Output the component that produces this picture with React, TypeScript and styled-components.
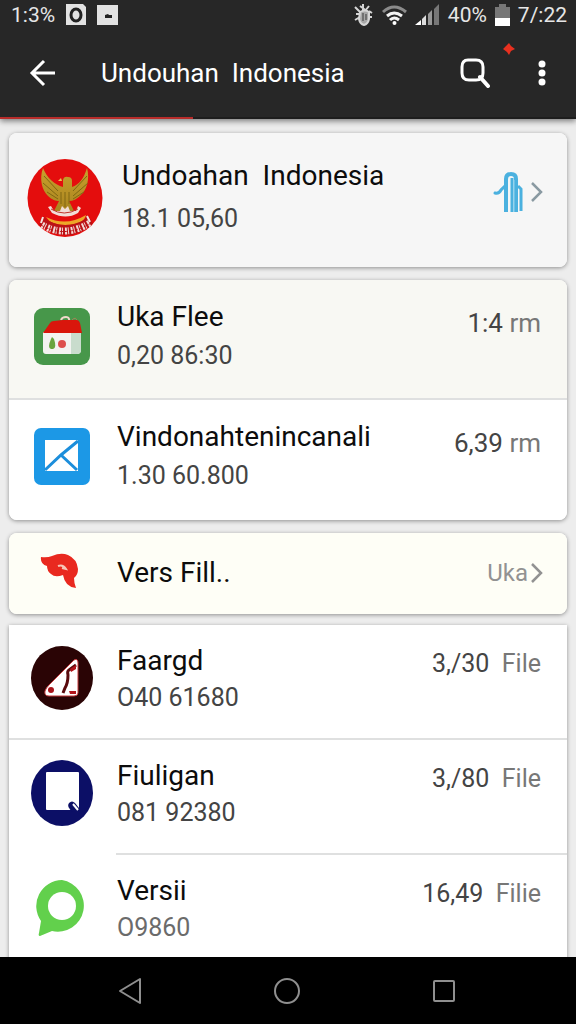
import React, { ReactNode } from "react";
import styled, { createGlobalStyle } from "styled-components";

const GlobalStyle = createGlobalStyle`
  *, *::before, *::after { box-sizing: border-box; }
  body { margin: 0; background: #ededed; font-family: Roboto, "Noto Sans", sans-serif; }
  h1, h2, p, ul { margin: 0; padding: 0; }
  ul { list-style: none; }
  svg { display: block; flex: none; }
`;

const Screen = styled.div`
  display: flex;
  flex-direction: column;
  height: 100vh;
  overflow: hidden;
`;

const Header = styled.header`
  flex: none;
  background: #272727;
  color: #fff;
  box-shadow: 0 2px 6px rgba(0, 0, 0, 0.5);
  z-index: 1;
`;

const StatusBar = styled.div`
  display: flex;
  align-items: center;
  justify-content: space-between;
  height: 29px;
  padding: 0 9px 0 11px;
  font-size: 21px;
  line-height: 28px;
  color: #e6e6e6;
`;

const StatusGroup = styled.div<{ $gap: number }>`
  display: flex;
  align-items: center;
  gap: ${(p) => p.$gap}px;
`;

const Toolbar = styled.div`
  display: flex;
  align-items: center;
  height: 88px;
  padding: 0 16px 0 25px;
`;

const Title = styled.h1`
  flex: 1;
  margin-left: 42px;
  font-size: 26px;
  font-weight: 400;
  line-height: 36px;
  white-space: pre;
`;

const Actions = styled.div`
  display: flex;
  gap: 21px;
`;

const IconButton = styled.button<{ $width: number }>`
  position: relative;
  display: flex;
  align-items: center;
  justify-content: center;
  width: ${(p) => p.$width}px;
  height: 48px;
  padding: 0;
  border: 0;
  background: none;
  color: inherit;
`;

const AlertDot = styled.svg`
  position: absolute;
  top: -6px;
  right: -12px;
`;

const Progress = styled.div`
  height: 2px;
  background: #1d1d1d;
`;

const ProgressValue = styled.div`
  width: 33.5%;
  height: 100%;
  background: #b82c2a;
`;

const Content = styled.main`
  display: flex;
  flex: 1;
  flex-direction: column;
  gap: 13px;
  min-height: 0;
  padding: 14px 9px 0;
  overflow: hidden;
`;

const Card = styled.ul<{ $flat?: boolean }>`
  flex: none;
  overflow: hidden;
  margin-top: ${(p) => (p.$flat ? "-2px" : "0")};
  border-radius: ${(p) => (p.$flat ? "0" : "8px")};
  background: #fff;
  box-shadow: 0 1px 4px rgba(0, 0, 0, 0.4);
`;

type Size = "hero" | "tall" | "slim" | "list";

const metrics = {
  hero: { height: 134, top: 21, line: 43, slot: 130, icon: 113, aside: 0, amount: 26 },
  tall: { height: 120, top: 17, line: 39, slot: 112, icon: 108, aside: 24, amount: 26 },
  slim: { height: 81, top: 20, line: 39, slot: 75, icon: 108, aside: 20, amount: 26 },
  list: { height: 115, top: 17, line: 37, slot: 106, icon: 108, aside: 19, amount: 25 },
};

const Row = styled.li<{ $size: Size; $tint?: string; $divider?: "full" | "inset" }>`
  position: relative;
  display: flex;
  align-items: flex-start;
  height: ${(p) => metrics[p.$size].height}px;
  padding-right: 26px;
  background: ${(p) => p.$tint ?? "#fff"};
  color: #0c0c0c;

  &::after {
    content: "";
    display: ${(p) => (p.$divider ? "block" : "none")};
    position: absolute;
    right: 0;
    bottom: 0;
    left: ${(p) => (p.$divider === "inset" ? "107px" : "0")};
    height: 2px;
    background: #dfe0e0;
  }
`;

const IconSlot = styled.div<{ $size: Size }>`
  display: flex;
  flex: none;
  align-items: center;
  justify-content: center;
  width: ${(p) => metrics[p.$size].icon}px;
  height: ${(p) => metrics[p.$size].slot}px;
  padding-right: 2px;
`;

const Texts = styled.div<{ $size: Size }>`
  flex: 1;
  min-width: 0;
  padding-top: ${(p) => metrics[p.$size].top}px;
  line-height: ${(p) => metrics[p.$size].line}px;
  white-space: pre;
`;

const Name = styled.h2`
  font-size: 28px;
  font-weight: 400;
  line-height: inherit;
`;

const Detail = styled.p<{ $light?: boolean }>`
  font-size: 25px;
  color: ${(p) => (p.$light ? "#6b6b6b" : "#444")};
`;

const Amount = styled.p<{ $size: Size }>`
  padding-top: ${(p) => metrics[p.$size].aside}px;
  font-size: ${(p) => metrics[p.$size].amount}px;
  line-height: 39px;
  color: #444;
  white-space: pre;
`;

const Unit = styled.span`
  color: #777;
`;

const MoreLink = styled.a<{ $height: number; $gap: number }>`
  display: flex;
  align-items: center;
  height: ${(p) => p.$height}px;
  gap: ${(p) => p.$gap}px;
  margin-right: -2px;
  font-size: 24px;
  color: #929292;
  text-decoration: none;
`;

const NavBar = styled.nav`
  display: flex;
  flex: none;
  align-items: center;
  justify-content: space-between;
  height: 67px;
  padding: 0 100px 0 98px;
  background: #000;
  color: #8f8f8f;
  z-index: 1;
`;

const Chevron = ({ color }: { color: string }) => (
  <svg width="12" height="22" viewBox="0 0 12 22" fill="none" stroke={color} strokeWidth="2.500">
    <path d="M1 2l9 9-9 9" />
  </svg>
);

const Emblem = () => (
  <svg width="76" height="80" viewBox="0 0 76 80">
    <defs>
      <clipPath id="disc"><ellipse cx="38" cy="40" rx="37.500" ry="39" /></clipPath>
      <linearGradient id="gold" x1="0" y1="0" x2="0" y2="1">
        <stop offset="0" stopColor="#c9a02c" />
        <stop offset="1" stopColor="#a9851f" />
      </linearGradient>
    </defs>
    <g clipPath="url(#disc)">
      <rect width="76" height="80" fill="#e40d0d" />
      <path d="M16 10c-4 11-1 22 5 28 4 4 8 5 11 5l-5 10h20l-5-10c4 0 8-2 11-5 7-6 10-17 7-28-3 10-8 17-15 19v-6q0-4-4-4-4-1-5 3v7c-8-2-16-9-20-19z" fill="url(#gold)" />
      <path d="M17 18l14 15M16 25l15 13M20 34l11 7M60 18L46 33M61 25L46 38M57 34l-11 7M34 34v12M38 34v15M42 34v12" stroke="#806713" strokeWidth="1" />
      <path d="M34 20l-3 3h4z" fill="#e8c251" />
      <path d="M21 49l3-1 3 5h6l2-5 3 3 3-3 2 5h6l2-5 3 2-3 5q-12 7-26 0z" fill="#f1ded7" />
      <path d="M24 51q13 8 27 0" fill="none" stroke="#c0362c" strokeWidth="1" />
      <path d="M19 59q20 10 40-2-2 10-21 10-14 0-19-8z" fill="#eda728" />
      <path d="M16 58l4 4q18 10 37 0l4-5 5 9q-26 22-54 1z" fill="#bb1216" />
      <path d="M16 59l-2 6M60 58l3 6" stroke="#f6e5e2" strokeWidth="2" />
      <path d="M15 67q23 13 48-2" fill="none" stroke="#f3dbd8" strokeWidth="7" strokeDasharray="2 1 1 2" />
      <path d="M14 67q24 14 50-2" fill="none" stroke="#bb1216" strokeWidth="1" strokeDasharray="3 2" />
    </g>
  </svg>
);

const HouseIcon = () => (
  <svg width="56" height="57" viewBox="0 0 56 57">
    <rect width="56" height="57" rx="9" fill="#47974a" />
    <path d="M9 24v19q0 3 3 3h31q4 0 4-4V24z" fill="#f3f3f1" />
    <path d="M37 25h10v17q0 4-4 4h-6z" fill="#c9dccd" />
    <path d="M27 12q1-3 5-3t3 5" fill="none" stroke="#f0d9cc" strokeWidth="2" />
    <path d="M38 12q4-4 5 1" fill="none" stroke="#a78458" strokeWidth="1" />
    <path d="M9 25l7-10q1-2 4-2l9-1 14 0q2 0 3 3l2 10z" fill="#d9160c" />
    <path d="M17 31l1-2 2 2q3 9-1 10h-2q-4-1 0-10z" fill="#69a43f" />
    <circle cx="28" cy="36" r="4" fill="#dd4f4d" />
  </svg>
);

const MailIcon = () => (
  <svg width="56" height="57" viewBox="0 0 56 57">
    <rect width="56" height="57" rx="7" fill="#1c98e6" />
    <path d="M11 12h33v31H11z" fill="#fff" />
    <path d="M11 42l16-15L44 13M27 27l16 15" fill="none" stroke="#1c8edb" strokeWidth="3" />
  </svg>
);

const BirdIcon = () => (
  <svg width="44" height="36" viewBox="0 0 44 36">
    <path d="M1 4q6 1 11-1Q21-1 28 2q9 4 10 14 0 6-4 9 0 5 2 10-11-1-13-13-8 3-12-1-4-3-4-8Q0 11 1 4z" fill="#e9291f" />
    <path d="M18 13q5-2 8 3l-4-1" fill="none" stroke="#f7c6b8" strokeWidth="2" />
  </svg>
);

const SailIcon = () => (
  <svg width="62" height="64" viewBox="0 0 62 64">
    <ellipse cx="31" cy="32" rx="31" ry="32" fill="#2a0405" />
    <path d="M43 14q4-2 4 3v30q0 3-4 3H18q-5 0-4-5 1-3 4-6z" fill="#fff" stroke="#c53a3d" strokeWidth="1" />
    <path d="M45 19l-7 5q-2 1-1 5 0 8-3 13l-2 5" fill="none" stroke="#5a0a0d" strokeWidth="3" />
    <path d="M39 23l6-4v4l-5 3zM38 45h7v3h-6z" fill="#b3151b" />
    <circle cx="20" cy="44" r="3" fill="#a8131a" />
  </svg>
);

const NoteIcon = () => (
  <svg width="63" height="66" viewBox="0 0 63 66">
    <ellipse cx="31" cy="33" rx="31" ry="33" fill="#0c0f66" />
    <rect x="15" y="12" width="33" height="38" rx="1" fill="#fff" />
    <path d="M38 43q3-3 6 0l4 5v4h-6q-7-5-4-9z" fill="#0c0f66" />
    <path d="M42 44l5 6" stroke="#fff" strokeWidth="2" />
  </svg>
);

const ChatIcon = () => (
  <svg width="54" height="58" viewBox="0 0 54 58">
    <path d="M27 1a26 26 0 1 1-10 51L5 57q-2 0-1-3l2-12A26 26 0 0 1 27 1z" fill="#62d04c" />
    <circle cx="27" cy="27" r="14" fill="#fff" />
  </svg>
);

const TowerIcon = () => (
  <svg width="30" height="42" viewBox="0 0 30 42" fill="none" stroke="#4bb1df" strokeWidth="4">
    <path d="M2 22q4 1 6-3l4-4" strokeWidth="3" strokeLinecap="round" />
    <path d="M13 41V8q0-5 5-5t5 5v33" />
    <path d="M19 41V7" strokeWidth="3" />
    <path d="M21 41V9" stroke="#8fd3ef" strokeWidth="1" />
    <path d="M25 15l3 3v22" strokeWidth="3" />
  </svg>
);

interface Item {
  name: string;
  detail: string;
  value: string;
  unit: string;
  icon: ReactNode;
  size: Size;
  tint?: string;
  divider?: "full" | "inset";
  light?: boolean;
}

const recent: Item[] = [
  { name: "Uka Flee", detail: "0,20 86:30", value: "1:4", unit: " rm", icon: <HouseIcon />, size: "tall", tint: "#f8f8f3", divider: "full" },
  { name: "Vindonahtenincanali", detail: "1.30 60.800", value: "6,39", unit: " rm", icon: <MailIcon />, size: "tall" },
];

const files: Item[] = [
  { name: "Faargd", detail: "O40 61680", value: "3,/30", unit: "  File", icon: <SailIcon />, size: "list", divider: "full" },
  { name: "Fiuligan", detail: "081 92380", value: "3,/80", unit: "  File", icon: <NoteIcon />, size: "list", divider: "inset" },
  { name: "Versii", detail: "O9860", value: "16,49", unit: "  Filie", icon: <ChatIcon />, size: "list", light: true },
];

const FileRow = ({ item }: { item: Item }) => (
  <Row $size={item.size} $tint={item.tint} $divider={item.divider}>
    <IconSlot $size={item.size}>{item.icon}</IconSlot>
    <Texts $size={item.size}>
      <Name>{item.name}</Name>
      <Detail $light={item.light}>{item.detail}</Detail>
    </Texts>
    <Amount $size={item.size}>
      {item.value}
      <Unit>{item.unit}</Unit>
    </Amount>
  </Row>
);

export default function App() {
  return (
    <Screen>
      <GlobalStyle />
      <Header>
        <StatusBar>
          <StatusGroup $gap={11}>
            <span>1:3%</span>
            <svg width="20" height="21" viewBox="0 0 20 21">
              <path d="M0 0h17l3 3v18H0z" fill="#e2e2e2" />
              <ellipse cx="10" cy="11" rx="5" ry="6" fill="none" stroke="#222" strokeWidth="3" />
            </svg>
            <svg width="21" height="20" viewBox="0 0 21 20">
              <path d="M0 0h21v20H0z" fill="#e2e2e2" />
              <path d="M8 13v-3l3-1 1 1h3v3z" fill="#222" />
            </svg>
          </StatusGroup>
          <StatusGroup $gap={8}>
            <svg width="20" height="23" viewBox="0 0 20 23" fill="none" stroke="#d6d6d6" strokeWidth="2">
              <path d="M1 4l6 6M1 17l5-3M9 1v8M6 3l8 6M15 3l-4 5M2 11h4M15 8l3 2M18 14h-3" />
              <path d="M6 9q5-3 9 0v7q-1 5-5 6-4-1-5-6z" fill="#a8a8a8" />
              <path d="M9 10v8M12 11v6" stroke="#3a3a3a" strokeWidth="1" />
            </svg>
            <svg width="25" height="20" viewBox="0 0 25 20" fill="none" strokeWidth="3">
              <path d="M1 7q11-10 23 0" stroke="#8b8b8b" />
              <path d="M5 11q7-6 15 0M8 15q4-4 9 0" stroke="#f2f2f2" />
              <circle cx="12.500" cy="18" r="2" fill="#fff" />
            </svg>
            <svg width="25" height="21" viewBox="0 0 25 21">
              <path d="M0 21l6-5v5z" fill="#fff" />
              <path d="M7 15l4-4v10H7z" fill="#ddd" />
              <path d="M13 10l4-4v15h-4z" fill="#999" />
              <path d="M19 5l5-5v21h-5z" fill="#777" />
            </svg>
            <span>40%</span>
            <svg width="15" height="22" viewBox="0 0 15 22">
              <path d="M0 3h4V0h7v3h4v12H0z" fill="#777" />
              <path d="M0 14h15v8H0z" fill="#fff" />
            </svg>
            <span>7/:22</span>
          </StatusGroup>
        </StatusBar>
        <Toolbar>
          <IconButton $width={34} aria-label="Back">
            <svg width="28" height="28" viewBox="0 0 28 28" fill="none" stroke="#fff" strokeWidth="3">
              <path d="M27 14H4M16 2L4 14l12 12" />
            </svg>
          </IconButton>
          <Title>Undouhan  Indonesia</Title>
          <Actions>
            <IconButton $width={56} aria-label="Search">
              <svg width="30" height="30" viewBox="0 0 30 30" fill="none" stroke="#fff" strokeWidth="3">
                <path d="M8 2h8q7 0 7 7v6q0 7-7 7H9q-7 0-7-7V9q0-7 6-7z" />
                <path d="M20 19l8 9" strokeWidth="4" strokeLinecap="round" />
              </svg>
              <AlertDot width="12" height="12" viewBox="0 0 12 12">
                <path d="M6 0l2 3 4 3-4 2-2 4-2-3-4-3 3-3z" fill="#e8301f" />
              </AlertDot>
            </IconButton>
            <IconButton $width={36} aria-label="More options">
              <svg width="8" height="26" viewBox="0 0 8 26" fill="#fff">
                <circle cx="4" cy="4" r="3.500" />
                <circle cx="4" cy="13" r="3.500" />
                <circle cx="4" cy="22" r="3.500" />
              </svg>
            </IconButton>
          </Actions>
        </Toolbar>
        <Progress>
          <ProgressValue />
        </Progress>
      </Header>
      <Content>
        <Card>
          <Row $size="hero" $tint="#f6f6f6">
            <IconSlot $size="hero"><Emblem /></IconSlot>
            <Texts $size="hero">
              <Name>Undoahan  Indonesia</Name>
              <Detail>18.1 05,60</Detail>
            </Texts>
            <MoreLink $height={118} $gap={8} href="#indonesia" aria-label="Open Undoahan Indonesia">
              <TowerIcon />
              <Chevron color="#8a9aa2" />
            </MoreLink>
          </Row>
        </Card>
        <Card>
          {recent.map((item) => <FileRow key={item.name} item={item} />)}
        </Card>
        <Card>
          <Row $size="slim" $tint="#fefef6">
            <IconSlot $size="slim"><BirdIcon /></IconSlot>
            <Texts $size="slim">
              <Name>Vers Fill..</Name>
            </Texts>
            <MoreLink $height={79} $gap={3} href="#uka">
              Uka
              <Chevron color="#929292" />
            </MoreLink>
          </Row>
        </Card>
        <Card $flat>
          {files.map((item) => <FileRow key={item.name} item={item} />)}
        </Card>
      </Content>
      <NavBar>
        <IconButton $width={64} aria-label="Back">
          <svg width="24" height="28" viewBox="0 0 24 28" fill="none" stroke="currentColor" strokeWidth="2" strokeLinejoin="round">
            <path d="M22 2v24L2 14z" />
          </svg>
        </IconButton>
        <IconButton $width={64} aria-label="Home">
          <svg width="28" height="28" viewBox="0 0 28 28" fill="none" stroke="currentColor" strokeWidth="2">
            <circle cx="14" cy="14" r="12" />
          </svg>
        </IconButton>
        <IconButton $width={64} aria-label="Recent apps">
          <svg width="24" height="24" viewBox="0 0 24 24" fill="none" stroke="currentColor" strokeWidth="2">
            <rect x="2" y="2" width="20" height="20" rx="1" />
          </svg>
        </IconButton>
      </NavBar>
    </Screen>
  );
}
